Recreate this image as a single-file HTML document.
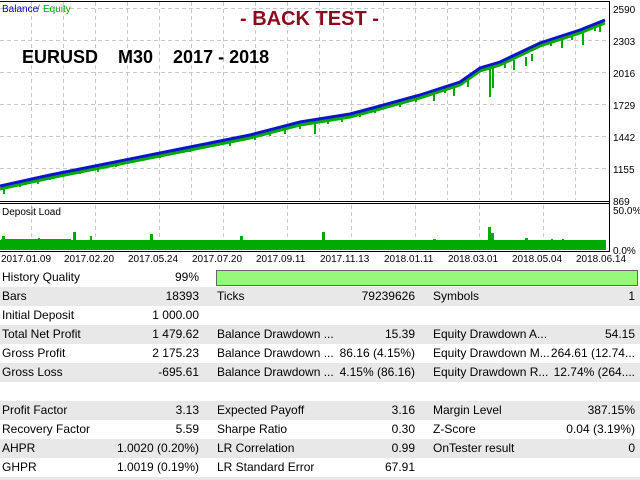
<!DOCTYPE html>
<html><head><meta charset="utf-8"><style>
body{margin:0;width:640px;height:480px;background:#fff;position:relative;overflow:hidden;font-family:"Liberation Sans",sans-serif}
.r{position:absolute;left:0;width:640px;height:19px;font-size:12px;line-height:19px;color:#000}
.g{background:#e8e8e8}
.r span{position:absolute;white-space:nowrap}
.l1{left:2px}.v1{right:441px}.l2{left:217px}.v2{right:225px}.l3{left:433px}.v3{right:5px}
</style></head><body>
<svg width="640" height="268" style="position:absolute;left:0;top:0" font-family="Liberation Sans" font-size="11">
<g stroke="#c8c8c8" stroke-dasharray="4,3" stroke-width="1">
<line x1="0" y1="8.5" x2="608" y2="8.5"/><line x1="0" y1="40.5" x2="608" y2="40.5"/><line x1="0" y1="72.5" x2="608" y2="72.5"/><line x1="0" y1="104.5" x2="608" y2="104.5"/><line x1="0" y1="136.5" x2="608" y2="136.5"/><line x1="0" y1="168.5" x2="608" y2="168.5"/>
<line x1="31.5" y1="2" x2="31.5" y2="200"/><line x1="63.5" y1="2" x2="63.5" y2="200"/><line x1="95.5" y1="2" x2="95.5" y2="200"/><line x1="127.5" y1="2" x2="127.5" y2="200"/><line x1="159.5" y1="2" x2="159.5" y2="200"/><line x1="191.5" y1="2" x2="191.5" y2="200"/><line x1="223.5" y1="2" x2="223.5" y2="200"/><line x1="255.5" y1="2" x2="255.5" y2="200"/><line x1="287.5" y1="2" x2="287.5" y2="200"/><line x1="319.5" y1="2" x2="319.5" y2="200"/><line x1="351.5" y1="2" x2="351.5" y2="200"/><line x1="383.5" y1="2" x2="383.5" y2="200"/><line x1="415.5" y1="2" x2="415.5" y2="200"/><line x1="447.5" y1="2" x2="447.5" y2="200"/><line x1="479.5" y1="2" x2="479.5" y2="200"/><line x1="511.5" y1="2" x2="511.5" y2="200"/><line x1="543.5" y1="2" x2="543.5" y2="200"/><line x1="575.5" y1="2" x2="575.5" y2="200"/>
<line x1="31.5" y1="205" x2="31.5" y2="250"/><line x1="95.5" y1="205" x2="95.5" y2="250"/><line x1="159.5" y1="205" x2="159.5" y2="250"/><line x1="223.5" y1="205" x2="223.5" y2="250"/><line x1="287.5" y1="205" x2="287.5" y2="250"/><line x1="351.5" y1="205" x2="351.5" y2="250"/><line x1="415.5" y1="205" x2="415.5" y2="250"/><line x1="479.5" y1="205" x2="479.5" y2="250"/><line x1="543.5" y1="205" x2="543.5" y2="250"/>
</g>
<polyline fill="none" stroke="#00aa00" stroke-width="3" points="0,189 50,178 100,168 150,158 200,148 250,138 300,125 350,117 380,109 420,98 460,85 480,71 500,65 540,46 580,33 605,23"/>
<g stroke="#00aa00" stroke-width="2">
<line x1="4" y1="186" x2="4" y2="194"/><line x1="20" y1="182" x2="20" y2="187"/><line x1="38" y1="178" x2="38" y2="184"/><line x1="50" y1="175" x2="50" y2="180"/><line x1="63" y1="172" x2="63" y2="177"/><line x1="80" y1="169" x2="80" y2="174"/><line x1="98" y1="165" x2="98" y2="172"/><line x1="116" y1="162" x2="116" y2="167"/><line x1="132" y1="157" x2="132" y2="163"/><line x1="145" y1="155" x2="145" y2="160"/><line x1="160" y1="152" x2="160" y2="158"/><line x1="175" y1="149" x2="175" y2="154"/><line x1="190" y1="146" x2="190" y2="152"/><line x1="210" y1="142" x2="210" y2="147"/><line x1="230" y1="138" x2="230" y2="146"/><line x1="240" y1="136" x2="240" y2="141"/><line x1="255" y1="134" x2="255" y2="140"/><line x1="270" y1="131" x2="270" y2="136"/><line x1="285" y1="128" x2="285" y2="134"/><line x1="300" y1="123" x2="300" y2="129"/><line x1="315" y1="121" x2="315" y2="134"/><line x1="328" y1="119" x2="328" y2="124"/><line x1="342" y1="116" x2="342" y2="122"/><line x1="360" y1="112" x2="360" y2="117"/><line x1="375" y1="108" x2="375" y2="113"/><line x1="400" y1="101" x2="400" y2="107"/><line x1="416" y1="97" x2="416" y2="102"/><line x1="434" y1="91" x2="434" y2="101"/><line x1="445" y1="88" x2="445" y2="93"/><line x1="454" y1="85" x2="454" y2="96"/><line x1="468" y1="79" x2="468" y2="87"/><line x1="490" y1="68" x2="490" y2="97"/><line x1="493" y1="66" x2="493" y2="88"/><line x1="505" y1="63" x2="505" y2="68"/><line x1="514" y1="60" x2="514" y2="70"/><line x1="526" y1="57" x2="526" y2="66"/><line x1="532" y1="54" x2="532" y2="61"/><line x1="551" y1="42" x2="551" y2="46"/><line x1="562" y1="39" x2="562" y2="48"/><line x1="572" y1="35" x2="572" y2="40"/><line x1="583" y1="30" x2="583" y2="45"/><line x1="595" y1="24" x2="595" y2="31"/><line x1="600" y1="22" x2="600" y2="32"/>
</g>
<polyline fill="none" stroke="#0a14c8" stroke-width="3" points="0,186 50,175 100,165 150,155 200,145 250,135 300,122 350,114 380,106 420,95 460,82 480,68 500,62 540,43 580,30 605,20"/>
<rect x="0" y="240" width="606" height="10" fill="#00aa00"/>
<g fill="#00aa00"><rect x="2" y="238" width="3" height="4"/><rect x="1" y="239" width="70" height="3"/><rect x="73" y="232" width="3" height="10"/><rect x="90" y="236" width="2" height="6"/><rect x="150" y="234" width="3" height="8"/><rect x="240" y="236" width="3" height="6"/><rect x="322" y="232" width="3" height="10"/><rect x="433" y="239" width="3" height="5"/><rect x="488" y="227" width="3" height="17"/><rect x="491" y="233" width="3" height="11"/><rect x="525" y="238" width="3" height="6"/><rect x="551" y="239" width="2" height="5"/><rect x="562" y="239" width="2" height="5"/><rect x="2" y="236" width="3" height="6"/><rect x="38" y="238" width="2" height="4"/></g>
<g stroke="#000" stroke-width="1" fill="none">
<line x1="0" y1="1.5" x2="610" y2="1.5"/><line x1="609.5" y1="1" x2="609.5" y2="252"/>
<line x1="0" y1="201.5" x2="610" y2="201.5"/><line x1="0" y1="203.5" x2="610" y2="203.5"/><line x1="0" y1="251.5" x2="610" y2="251.5"/>
</g>
<text x="2" y="12" font-size="10" fill="#0000c8">Balance</text><text x="37" y="12" font-size="10" fill="#555">/</text><text x="43" y="12" font-size="10" fill="#00aa00">Equity</text>
<text x="2" y="215" font-size="10" fill="#000">Deposit Load</text>
<text x="240" y="25" font-size="20" font-weight="bold" fill="#8b0a1e">- BACK TEST -</text>
<text x="22" y="63" font-size="18" font-weight="bold" fill="#000" xml:space="preserve" style="white-space:pre">EURUSD    M30    2017 - 2018</text>
<g font-size="10" fill="#000"><text x="613" y="13">2590</text><text x="613" y="45">2303</text><text x="613" y="77">2016</text><text x="613" y="109">1729</text><text x="613" y="141">1442</text><text x="613" y="173">1155</text><text x="613" y="205">869</text><text x="613" y="214">50.0%</text><text x="613" y="254">0.0%</text>
<text x="1" y="262">2017.01.09</text><text x="64" y="262">2017.02.20</text><text x="128" y="262">2017.05.24</text><text x="192" y="262">2017.07.20</text><text x="256" y="262">2017.09.11</text><text x="320" y="262">2017.11.13</text><text x="384" y="262">2018.01.11</text><text x="448" y="262">2018.03.01</text><text x="512" y="262">2018.05.04</text><text x="576" y="262">2018.06.14</text></g>
</svg>
<div class="r" style="top:268px"><span class="l1">History Quality</span><span class="v1">99%</span><div style="position:absolute;left:216px;top:2px;width:420px;height:14px;background:#98f87c;border:1px solid #666"></div></div>
<div class="r g" style="top:287px"><span class="l1">Bars</span><span class="v1">18393</span><span class="l2">Ticks</span><span class="v2">79239626</span><span class="l3">Symbols</span><span class="v3">1</span></div>
<div class="r" style="top:306px"><span class="l1">Initial Deposit</span><span class="v1">1 000.00</span></div>
<div class="r g" style="top:325px"><span class="l1">Total Net Profit</span><span class="v1">1 479.62</span><span class="l2">Balance Drawdown ...</span><span class="v2">15.39</span><span class="l3">Equity Drawdown A...</span><span class="v3">54.15</span></div>
<div class="r" style="top:344px"><span class="l1">Gross Profit</span><span class="v1">2 175.23</span><span class="l2">Balance Drawdown ...</span><span class="v2">86.16 (4.15%)</span><span class="l3">Equity Drawdown M...</span><span class="v3">264.61 (12.74...</span></div>
<div class="r g" style="top:363px"><span class="l1">Gross Loss</span><span class="v1">-695.61</span><span class="l2">Balance Drawdown ...</span><span class="v2">4.15% (86.16)</span><span class="l3">Equity Drawdown R...</span><span class="v3">12.74% (264....</span></div>
<div class="r" style="top:382px"></div>
<div class="r g" style="top:401px"><span class="l1">Profit Factor</span><span class="v1">3.13</span><span class="l2">Expected Payoff</span><span class="v2">3.16</span><span class="l3">Margin Level</span><span class="v3">387.15%</span></div>
<div class="r" style="top:420px"><span class="l1">Recovery Factor</span><span class="v1">5.59</span><span class="l2">Sharpe Ratio</span><span class="v2">0.30</span><span class="l3">Z-Score</span><span class="v3">0.04 (3.19%)</span></div>
<div class="r g" style="top:439px"><span class="l1">AHPR</span><span class="v1">1.0020 (0.20%)</span><span class="l2">LR Correlation</span><span class="v2">0.99</span><span class="l3">OnTester result</span><span class="v3">0</span></div>
<div class="r" style="top:458px"><span class="l1">GHPR</span><span class="v1">1.0019 (0.19%)</span><span class="l2">LR Standard Error</span><span class="v2">67.91</span></div>
<div class="r g" style="top:477px;height:3px"></div>
</body></html>
